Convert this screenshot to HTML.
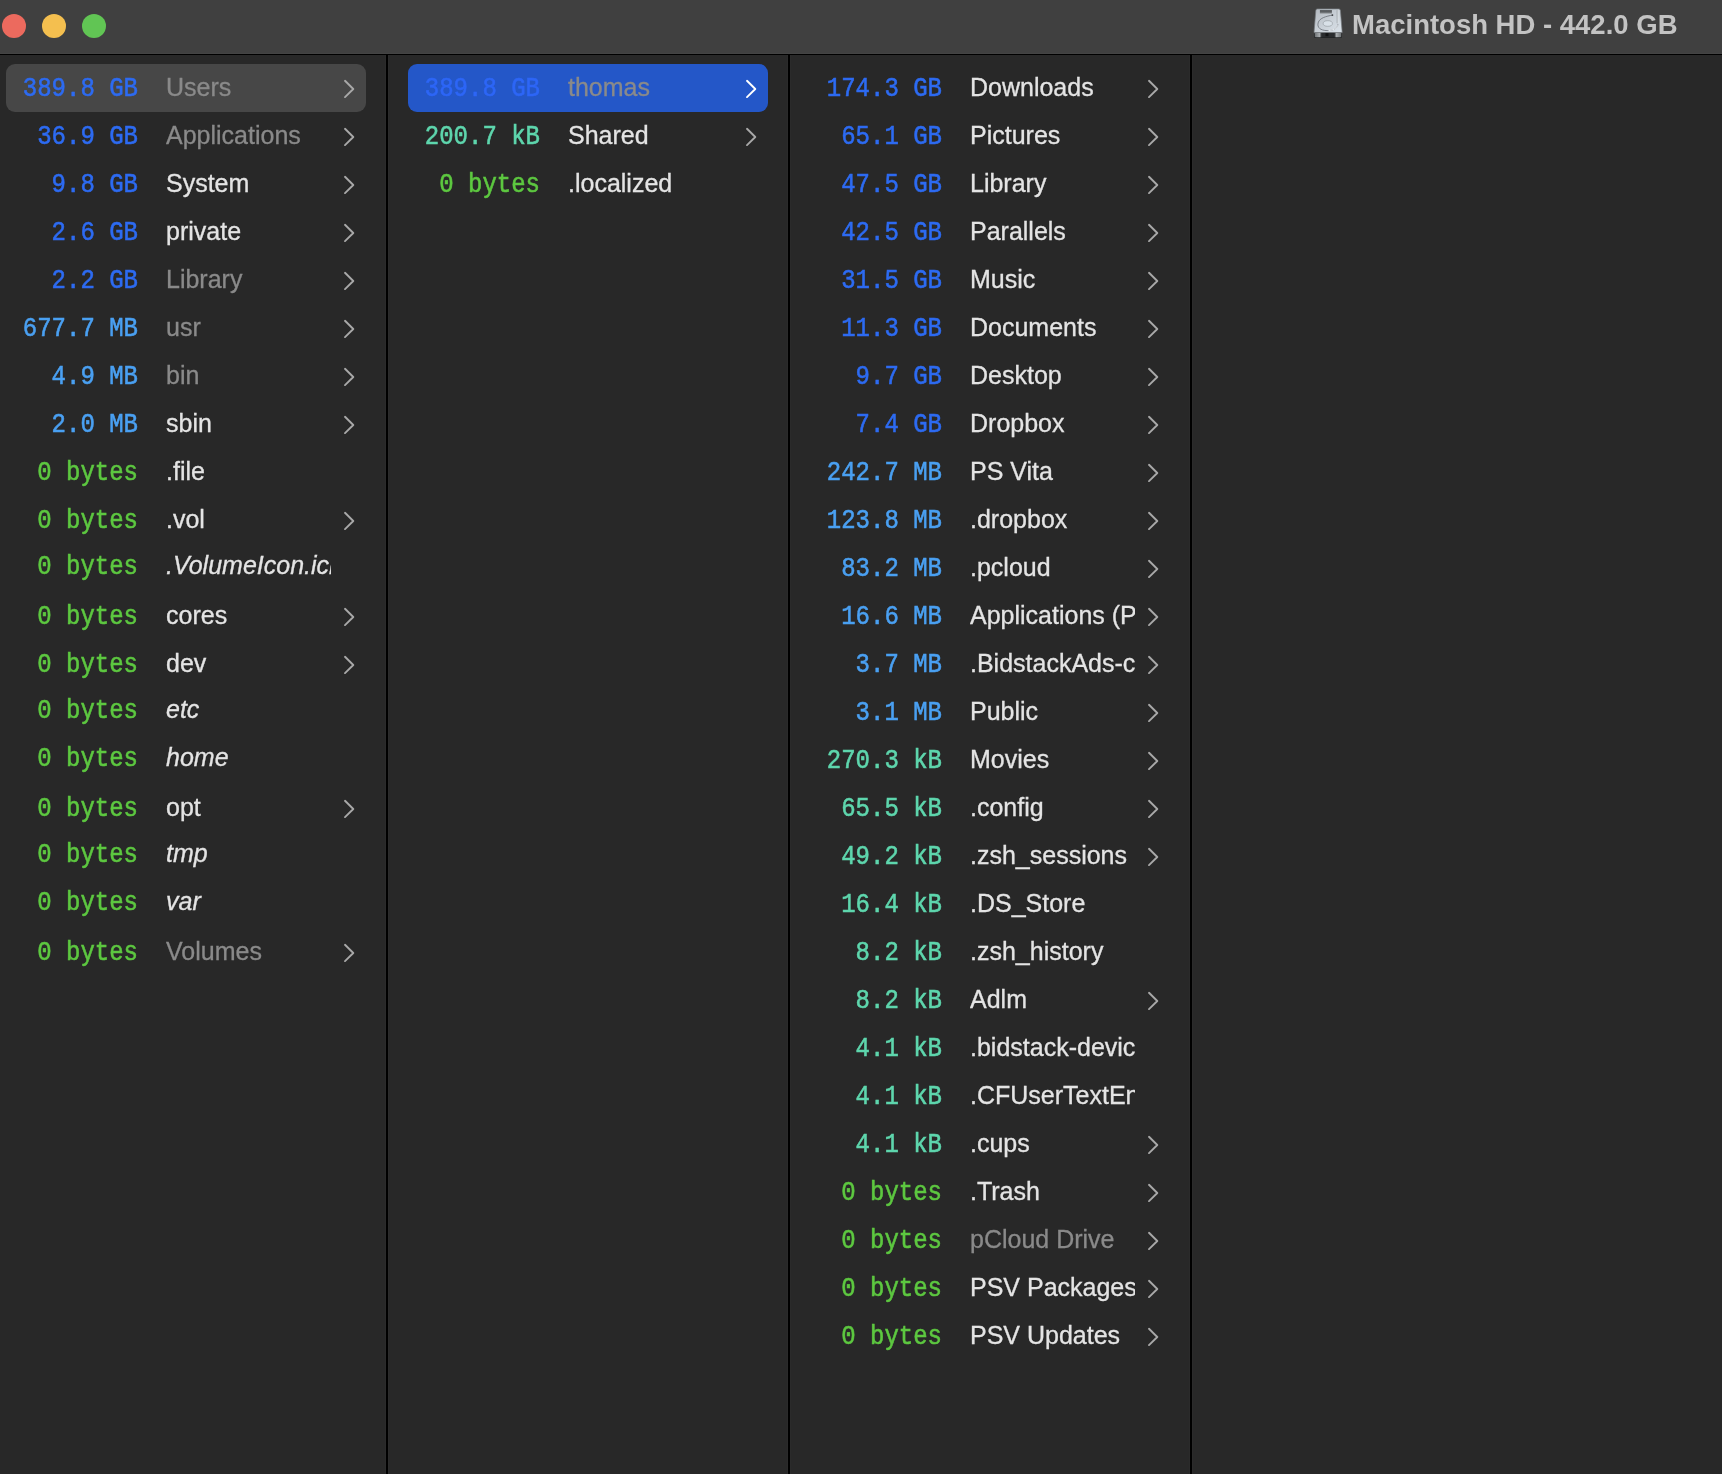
<!DOCTYPE html>
<html><head><meta charset="utf-8">
<style>
html,body{margin:0;padding:0;}
body{width:1722px;height:1474px;overflow:hidden;background:#282828;position:relative;font-family:"Liberation Sans",sans-serif;}
.tb{position:absolute;left:0;top:0;width:1722px;height:54px;background:#404040;}
.tbl{position:absolute;left:0;top:53px;width:1722px;height:1px;background:#444444;}
.tbb{position:absolute;left:0;top:54px;width:1722px;height:1px;background:#000;}
.tl{position:absolute;top:14px;width:24px;height:24px;border-radius:50%;}
.title{position:absolute;left:1352px;top:7px;font-weight:bold;font-size:27.5px;color:#c3c3c3;white-space:nowrap;line-height:36px;}
.sep{position:absolute;top:55px;width:2px;height:1419px;background:#000;}
.sepl{position:absolute;top:55px;width:1px;height:1419px;background:#2b2b2b;}
.row{position:absolute;width:386px;height:48px;}
.sel-gray .bx, .sel-blue .bx{}
.sz{position:absolute;right:248px;top:1px;height:48px;line-height:48px;font-family:"Liberation Mono",monospace;font-size:24px;white-space:pre;transform:scaleY(1.14);-webkit-text-stroke:0.5px currentColor;}
.nm{position:absolute;left:166px;top:-1px;-webkit-text-stroke:0.3px currentColor;height:48px;line-height:48px;font-size:25px;white-space:nowrap;overflow:hidden;width:165px;}
.nm.it{font-style:italic;}
.chev{position:absolute;left:341px;top:12px;}
.box{position:absolute;height:48px;border-radius:9px;}
</style></head><body><div id="wrap" style="position:absolute;left:0;top:0;width:1722px;height:1474px;will-change:transform;">
<div class="tb"></div><div class="tbl"></div><div class="tbb"></div>
<div class="tl" style="left:2px;background:#ec6a5e"></div>
<div class="tl" style="left:42px;background:#f4bf4f"></div>
<div class="tl" style="left:82px;background:#61c554"></div>
<svg style="position:absolute;left:1308px;top:4px" width="40" height="40" viewBox="0 0 40 40">
<defs>
<linearGradient id="fg" x1="0" y1="0" x2="1" y2="1"><stop offset="0" stop-color="#b3b9c0"/><stop offset="0.6" stop-color="#ccd3da"/><stop offset="1" stop-color="#dbe3ea"/></linearGradient>
<linearGradient id="sl" x1="0" y1="0" x2="0" y2="1"><stop offset="0" stop-color="#3f4245"/><stop offset="1" stop-color="#7c8084"/></linearGradient>
<linearGradient id="bs" x1="0" y1="0" x2="1" y2="0"><stop offset="0" stop-color="#6f7376"/><stop offset="0.18" stop-color="#a9adb0"/><stop offset="0.26" stop-color="#2a2c2e"/><stop offset="0.74" stop-color="#2a2c2e"/><stop offset="0.82" stop-color="#a9adb0"/><stop offset="1" stop-color="#6f7376"/></linearGradient>
</defs>
<rect x="6.2" y="27.5" width="27.6" height="6.4" rx="1.2" fill="#1f2122"/>
<rect x="6.8" y="28.4" width="26.4" height="4.8" rx="0.8" fill="url(#bs)"/>
<rect x="17.5" y="29.2" width="3" height="3" fill="#121314"/>
<path d="M9.4 4.9 L30.8 4.9 Q32.3 4.9 32.4 6.4 L34.2 28.5 L6 28.5 L7.8 6.4 Q7.9 4.9 9.4 4.9 Z" fill="url(#fg)" stroke="#74787d" stroke-width="0.7"/>
<rect x="11.9" y="6.2" width="12" height="2.9" fill="url(#sl)"/>
<rect x="11.9" y="9.1" width="12" height="0.9" fill="#9ea3a8"/>
<path d="M24.4 11.1 C19 12.2 10.2 13.8 9.9 20.2 C9.7 25.3 15 26.6 19.8 26.6 C24.8 26.6 29.3 24.6 29.9 20.4" fill="none" stroke="#6a6f76" stroke-width="0.8"/>
<path d="M20.5 26.5 C24.8 26.4 28.6 24.6 29.6 21.4" fill="none" stroke="#f4f7fa" stroke-width="0.9"/>
<circle cx="24.4" cy="11.1" r="0.9" fill="#3a3d40"/>
<ellipse cx="19.8" cy="19.5" rx="4.6" ry="2.8" fill="#d9e1e8" stroke="#8f959b" stroke-width="0.6"/>
<rect x="28.8" y="6.2" width="0.8" height="13" fill="#7e8388"/>
<rect x="29.6" y="6.2" width="0.6" height="13" fill="#eef2f5"/>
</svg>
<div class="title">Macintosh HD - 442.0 GB</div>
<div class="box" style="left:6px;top:64px;width:360px;background:#474747"></div>
<div class="box" style="left:408px;top:64px;width:360px;background:#2457c8"></div>
<div class="sepl" style="left:385px"></div><div class="sep" style="left:386px"></div><div class="sepl" style="left:388px"></div>
<div class="sepl" style="left:787px"></div><div class="sep" style="left:788px"></div><div class="sepl" style="left:790px"></div>
<div class="sepl" style="left:1189px"></div><div class="sep" style="left:1190px"></div><div class="sepl" style="left:1192px"></div>
<div class="row sel-gray" style="left:0px;top:64px"><span class="sz" style="color:#2d6bf2">389.8 GB</span><span class="nm" style="color:#8a8a8a">Users</span><svg class="chev" width="16" height="24" viewBox="0 0 16 24"><path d="M4 4.8 L12.3 13 L4 21.1" fill="none" stroke="#a8a8a8" stroke-width="1.9" stroke-linecap="round" stroke-linejoin="round"/></svg></div>
<div class="row" style="left:0px;top:112px"><span class="sz" style="color:#2d6bf2">36.9 GB</span><span class="nm" style="color:#8a8a8a">Applications</span><svg class="chev" width="16" height="24" viewBox="0 0 16 24"><path d="M4 4.8 L12.3 13 L4 21.1" fill="none" stroke="#a8a8a8" stroke-width="1.9" stroke-linecap="round" stroke-linejoin="round"/></svg></div>
<div class="row" style="left:0px;top:160px"><span class="sz" style="color:#2d6bf2">9.8 GB</span><span class="nm" style="color:#e4e4e4">System</span><svg class="chev" width="16" height="24" viewBox="0 0 16 24"><path d="M4 4.8 L12.3 13 L4 21.1" fill="none" stroke="#a8a8a8" stroke-width="1.9" stroke-linecap="round" stroke-linejoin="round"/></svg></div>
<div class="row" style="left:0px;top:208px"><span class="sz" style="color:#2d6bf2">2.6 GB</span><span class="nm" style="color:#e4e4e4">private</span><svg class="chev" width="16" height="24" viewBox="0 0 16 24"><path d="M4 4.8 L12.3 13 L4 21.1" fill="none" stroke="#a8a8a8" stroke-width="1.9" stroke-linecap="round" stroke-linejoin="round"/></svg></div>
<div class="row" style="left:0px;top:256px"><span class="sz" style="color:#2d6bf2">2.2 GB</span><span class="nm" style="color:#8a8a8a">Library</span><svg class="chev" width="16" height="24" viewBox="0 0 16 24"><path d="M4 4.8 L12.3 13 L4 21.1" fill="none" stroke="#a8a8a8" stroke-width="1.9" stroke-linecap="round" stroke-linejoin="round"/></svg></div>
<div class="row" style="left:0px;top:304px"><span class="sz" style="color:#4aa0f2">677.7 MB</span><span class="nm" style="color:#8a8a8a">usr</span><svg class="chev" width="16" height="24" viewBox="0 0 16 24"><path d="M4 4.8 L12.3 13 L4 21.1" fill="none" stroke="#a8a8a8" stroke-width="1.9" stroke-linecap="round" stroke-linejoin="round"/></svg></div>
<div class="row" style="left:0px;top:352px"><span class="sz" style="color:#4aa0f2">4.9 MB</span><span class="nm" style="color:#8a8a8a">bin</span><svg class="chev" width="16" height="24" viewBox="0 0 16 24"><path d="M4 4.8 L12.3 13 L4 21.1" fill="none" stroke="#a8a8a8" stroke-width="1.9" stroke-linecap="round" stroke-linejoin="round"/></svg></div>
<div class="row" style="left:0px;top:400px"><span class="sz" style="color:#4aa0f2">2.0 MB</span><span class="nm" style="color:#e4e4e4">sbin</span><svg class="chev" width="16" height="24" viewBox="0 0 16 24"><path d="M4 4.8 L12.3 13 L4 21.1" fill="none" stroke="#a8a8a8" stroke-width="1.9" stroke-linecap="round" stroke-linejoin="round"/></svg></div>
<div class="row" style="left:0px;top:448px"><span class="sz" style="color:#5dc840">0 bytes</span><span class="nm" style="color:#e4e4e4">.file</span></div>
<div class="row" style="left:0px;top:496px"><span class="sz" style="color:#5dc840">0 bytes</span><span class="nm" style="color:#e4e4e4">.vol</span><svg class="chev" width="16" height="24" viewBox="0 0 16 24"><path d="M4 4.8 L12.3 13 L4 21.1" fill="none" stroke="#a8a8a8" stroke-width="1.9" stroke-linecap="round" stroke-linejoin="round"/></svg></div>
<div class="row" style="left:0px;top:542px"><span class="sz" style="color:#5dc840">0 bytes</span><span class="nm it" style="color:#e4e4e4">.VolumeIcon.icns</span></div>
<div class="row" style="left:0px;top:592px"><span class="sz" style="color:#5dc840">0 bytes</span><span class="nm" style="color:#e4e4e4">cores</span><svg class="chev" width="16" height="24" viewBox="0 0 16 24"><path d="M4 4.8 L12.3 13 L4 21.1" fill="none" stroke="#a8a8a8" stroke-width="1.9" stroke-linecap="round" stroke-linejoin="round"/></svg></div>
<div class="row" style="left:0px;top:640px"><span class="sz" style="color:#5dc840">0 bytes</span><span class="nm" style="color:#e4e4e4">dev</span><svg class="chev" width="16" height="24" viewBox="0 0 16 24"><path d="M4 4.8 L12.3 13 L4 21.1" fill="none" stroke="#a8a8a8" stroke-width="1.9" stroke-linecap="round" stroke-linejoin="round"/></svg></div>
<div class="row" style="left:0px;top:686px"><span class="sz" style="color:#5dc840">0 bytes</span><span class="nm it" style="color:#e4e4e4">etc</span></div>
<div class="row" style="left:0px;top:734px"><span class="sz" style="color:#5dc840">0 bytes</span><span class="nm it" style="color:#e4e4e4">home</span></div>
<div class="row" style="left:0px;top:784px"><span class="sz" style="color:#5dc840">0 bytes</span><span class="nm" style="color:#e4e4e4">opt</span><svg class="chev" width="16" height="24" viewBox="0 0 16 24"><path d="M4 4.8 L12.3 13 L4 21.1" fill="none" stroke="#a8a8a8" stroke-width="1.9" stroke-linecap="round" stroke-linejoin="round"/></svg></div>
<div class="row" style="left:0px;top:830px"><span class="sz" style="color:#5dc840">0 bytes</span><span class="nm it" style="color:#e4e4e4">tmp</span></div>
<div class="row" style="left:0px;top:878px"><span class="sz" style="color:#5dc840">0 bytes</span><span class="nm it" style="color:#e4e4e4">var</span></div>
<div class="row" style="left:0px;top:928px"><span class="sz" style="color:#5dc840">0 bytes</span><span class="nm" style="color:#8a8a8a">Volumes</span><svg class="chev" width="16" height="24" viewBox="0 0 16 24"><path d="M4 4.8 L12.3 13 L4 21.1" fill="none" stroke="#a8a8a8" stroke-width="1.9" stroke-linecap="round" stroke-linejoin="round"/></svg></div>
<div class="row sel-blue" style="left:402px;top:64px"><span class="sz" style="color:#2d66f6">389.8 GB</span><span class="nm" style="color:#8a8a8a">thomas</span><svg class="chev" width="16" height="24" viewBox="0 0 16 24"><path d="M4 4.8 L12.3 13 L4 21.1" fill="none" stroke="#ffffff" stroke-width="1.9" stroke-linecap="round" stroke-linejoin="round"/></svg></div>
<div class="row" style="left:402px;top:112px"><span class="sz" style="color:#5ed6ad">200.7 kB</span><span class="nm" style="color:#e4e4e4">Shared</span><svg class="chev" width="16" height="24" viewBox="0 0 16 24"><path d="M4 4.8 L12.3 13 L4 21.1" fill="none" stroke="#a8a8a8" stroke-width="1.9" stroke-linecap="round" stroke-linejoin="round"/></svg></div>
<div class="row" style="left:402px;top:160px"><span class="sz" style="color:#5dc840">0 bytes</span><span class="nm" style="color:#e4e4e4">.localized</span></div>
<div class="row" style="left:804px;top:64px"><span class="sz" style="color:#2d6bf2">174.3 GB</span><span class="nm" style="color:#e4e4e4">Downloads</span><svg class="chev" width="16" height="24" viewBox="0 0 16 24"><path d="M4 4.8 L12.3 13 L4 21.1" fill="none" stroke="#a8a8a8" stroke-width="1.9" stroke-linecap="round" stroke-linejoin="round"/></svg></div>
<div class="row" style="left:804px;top:112px"><span class="sz" style="color:#2d6bf2">65.1 GB</span><span class="nm" style="color:#e4e4e4">Pictures</span><svg class="chev" width="16" height="24" viewBox="0 0 16 24"><path d="M4 4.8 L12.3 13 L4 21.1" fill="none" stroke="#a8a8a8" stroke-width="1.9" stroke-linecap="round" stroke-linejoin="round"/></svg></div>
<div class="row" style="left:804px;top:160px"><span class="sz" style="color:#2d6bf2">47.5 GB</span><span class="nm" style="color:#e4e4e4">Library</span><svg class="chev" width="16" height="24" viewBox="0 0 16 24"><path d="M4 4.8 L12.3 13 L4 21.1" fill="none" stroke="#a8a8a8" stroke-width="1.9" stroke-linecap="round" stroke-linejoin="round"/></svg></div>
<div class="row" style="left:804px;top:208px"><span class="sz" style="color:#2d6bf2">42.5 GB</span><span class="nm" style="color:#e4e4e4">Parallels</span><svg class="chev" width="16" height="24" viewBox="0 0 16 24"><path d="M4 4.8 L12.3 13 L4 21.1" fill="none" stroke="#a8a8a8" stroke-width="1.9" stroke-linecap="round" stroke-linejoin="round"/></svg></div>
<div class="row" style="left:804px;top:256px"><span class="sz" style="color:#2d6bf2">31.5 GB</span><span class="nm" style="color:#e4e4e4">Music</span><svg class="chev" width="16" height="24" viewBox="0 0 16 24"><path d="M4 4.8 L12.3 13 L4 21.1" fill="none" stroke="#a8a8a8" stroke-width="1.9" stroke-linecap="round" stroke-linejoin="round"/></svg></div>
<div class="row" style="left:804px;top:304px"><span class="sz" style="color:#2d6bf2">11.3 GB</span><span class="nm" style="color:#e4e4e4">Documents</span><svg class="chev" width="16" height="24" viewBox="0 0 16 24"><path d="M4 4.8 L12.3 13 L4 21.1" fill="none" stroke="#a8a8a8" stroke-width="1.9" stroke-linecap="round" stroke-linejoin="round"/></svg></div>
<div class="row" style="left:804px;top:352px"><span class="sz" style="color:#2d6bf2">9.7 GB</span><span class="nm" style="color:#e4e4e4">Desktop</span><svg class="chev" width="16" height="24" viewBox="0 0 16 24"><path d="M4 4.8 L12.3 13 L4 21.1" fill="none" stroke="#a8a8a8" stroke-width="1.9" stroke-linecap="round" stroke-linejoin="round"/></svg></div>
<div class="row" style="left:804px;top:400px"><span class="sz" style="color:#2d6bf2">7.4 GB</span><span class="nm" style="color:#e4e4e4">Dropbox</span><svg class="chev" width="16" height="24" viewBox="0 0 16 24"><path d="M4 4.8 L12.3 13 L4 21.1" fill="none" stroke="#a8a8a8" stroke-width="1.9" stroke-linecap="round" stroke-linejoin="round"/></svg></div>
<div class="row" style="left:804px;top:448px"><span class="sz" style="color:#4aa0f2">242.7 MB</span><span class="nm" style="color:#e4e4e4">PS Vita</span><svg class="chev" width="16" height="24" viewBox="0 0 16 24"><path d="M4 4.8 L12.3 13 L4 21.1" fill="none" stroke="#a8a8a8" stroke-width="1.9" stroke-linecap="round" stroke-linejoin="round"/></svg></div>
<div class="row" style="left:804px;top:496px"><span class="sz" style="color:#4aa0f2">123.8 MB</span><span class="nm" style="color:#e4e4e4">.dropbox</span><svg class="chev" width="16" height="24" viewBox="0 0 16 24"><path d="M4 4.8 L12.3 13 L4 21.1" fill="none" stroke="#a8a8a8" stroke-width="1.9" stroke-linecap="round" stroke-linejoin="round"/></svg></div>
<div class="row" style="left:804px;top:544px"><span class="sz" style="color:#4aa0f2">83.2 MB</span><span class="nm" style="color:#e4e4e4">.pcloud</span><svg class="chev" width="16" height="24" viewBox="0 0 16 24"><path d="M4 4.8 L12.3 13 L4 21.1" fill="none" stroke="#a8a8a8" stroke-width="1.9" stroke-linecap="round" stroke-linejoin="round"/></svg></div>
<div class="row" style="left:804px;top:592px"><span class="sz" style="color:#4aa0f2">16.6 MB</span><span class="nm" style="color:#e4e4e4">Applications (Parallels)</span><svg class="chev" width="16" height="24" viewBox="0 0 16 24"><path d="M4 4.8 L12.3 13 L4 21.1" fill="none" stroke="#a8a8a8" stroke-width="1.9" stroke-linecap="round" stroke-linejoin="round"/></svg></div>
<div class="row" style="left:804px;top:640px"><span class="sz" style="color:#4aa0f2">3.7 MB</span><span class="nm" style="color:#e4e4e4">.BidstackAds-config</span><svg class="chev" width="16" height="24" viewBox="0 0 16 24"><path d="M4 4.8 L12.3 13 L4 21.1" fill="none" stroke="#a8a8a8" stroke-width="1.9" stroke-linecap="round" stroke-linejoin="round"/></svg></div>
<div class="row" style="left:804px;top:688px"><span class="sz" style="color:#4aa0f2">3.1 MB</span><span class="nm" style="color:#e4e4e4">Public</span><svg class="chev" width="16" height="24" viewBox="0 0 16 24"><path d="M4 4.8 L12.3 13 L4 21.1" fill="none" stroke="#a8a8a8" stroke-width="1.9" stroke-linecap="round" stroke-linejoin="round"/></svg></div>
<div class="row" style="left:804px;top:736px"><span class="sz" style="color:#5ed6ad">270.3 kB</span><span class="nm" style="color:#e4e4e4">Movies</span><svg class="chev" width="16" height="24" viewBox="0 0 16 24"><path d="M4 4.8 L12.3 13 L4 21.1" fill="none" stroke="#a8a8a8" stroke-width="1.9" stroke-linecap="round" stroke-linejoin="round"/></svg></div>
<div class="row" style="left:804px;top:784px"><span class="sz" style="color:#5ed6ad">65.5 kB</span><span class="nm" style="color:#e4e4e4">.config</span><svg class="chev" width="16" height="24" viewBox="0 0 16 24"><path d="M4 4.8 L12.3 13 L4 21.1" fill="none" stroke="#a8a8a8" stroke-width="1.9" stroke-linecap="round" stroke-linejoin="round"/></svg></div>
<div class="row" style="left:804px;top:832px"><span class="sz" style="color:#5ed6ad">49.2 kB</span><span class="nm" style="color:#e4e4e4">.zsh_sessions</span><svg class="chev" width="16" height="24" viewBox="0 0 16 24"><path d="M4 4.8 L12.3 13 L4 21.1" fill="none" stroke="#a8a8a8" stroke-width="1.9" stroke-linecap="round" stroke-linejoin="round"/></svg></div>
<div class="row" style="left:804px;top:880px"><span class="sz" style="color:#5ed6ad">16.4 kB</span><span class="nm" style="color:#e4e4e4">.DS_Store</span></div>
<div class="row" style="left:804px;top:928px"><span class="sz" style="color:#5ed6ad">8.2 kB</span><span class="nm" style="color:#e4e4e4">.zsh_history</span></div>
<div class="row" style="left:804px;top:976px"><span class="sz" style="color:#5ed6ad">8.2 kB</span><span class="nm" style="color:#e4e4e4">Adlm</span><svg class="chev" width="16" height="24" viewBox="0 0 16 24"><path d="M4 4.8 L12.3 13 L4 21.1" fill="none" stroke="#a8a8a8" stroke-width="1.9" stroke-linecap="round" stroke-linejoin="round"/></svg></div>
<div class="row" style="left:804px;top:1024px"><span class="sz" style="color:#5ed6ad">4.1 kB</span><span class="nm" style="color:#e4e4e4">.bidstack-device</span></div>
<div class="row" style="left:804px;top:1072px"><span class="sz" style="color:#5ed6ad">4.1 kB</span><span class="nm" style="color:#e4e4e4">.CFUserTextEncoding</span></div>
<div class="row" style="left:804px;top:1120px"><span class="sz" style="color:#5ed6ad">4.1 kB</span><span class="nm" style="color:#e4e4e4">.cups</span><svg class="chev" width="16" height="24" viewBox="0 0 16 24"><path d="M4 4.8 L12.3 13 L4 21.1" fill="none" stroke="#a8a8a8" stroke-width="1.9" stroke-linecap="round" stroke-linejoin="round"/></svg></div>
<div class="row" style="left:804px;top:1168px"><span class="sz" style="color:#5dc840">0 bytes</span><span class="nm" style="color:#e4e4e4">.Trash</span><svg class="chev" width="16" height="24" viewBox="0 0 16 24"><path d="M4 4.8 L12.3 13 L4 21.1" fill="none" stroke="#a8a8a8" stroke-width="1.9" stroke-linecap="round" stroke-linejoin="round"/></svg></div>
<div class="row" style="left:804px;top:1216px"><span class="sz" style="color:#5dc840">0 bytes</span><span class="nm" style="color:#8a8a8a">pCloud Drive</span><svg class="chev" width="16" height="24" viewBox="0 0 16 24"><path d="M4 4.8 L12.3 13 L4 21.1" fill="none" stroke="#a8a8a8" stroke-width="1.9" stroke-linecap="round" stroke-linejoin="round"/></svg></div>
<div class="row" style="left:804px;top:1264px"><span class="sz" style="color:#5dc840">0 bytes</span><span class="nm" style="color:#e4e4e4">PSV Packages</span><svg class="chev" width="16" height="24" viewBox="0 0 16 24"><path d="M4 4.8 L12.3 13 L4 21.1" fill="none" stroke="#a8a8a8" stroke-width="1.9" stroke-linecap="round" stroke-linejoin="round"/></svg></div>
<div class="row" style="left:804px;top:1312px"><span class="sz" style="color:#5dc840">0 bytes</span><span class="nm" style="color:#e4e4e4">PSV Updates</span><svg class="chev" width="16" height="24" viewBox="0 0 16 24"><path d="M4 4.8 L12.3 13 L4 21.1" fill="none" stroke="#a8a8a8" stroke-width="1.9" stroke-linecap="round" stroke-linejoin="round"/></svg></div>
</div></body></html>
